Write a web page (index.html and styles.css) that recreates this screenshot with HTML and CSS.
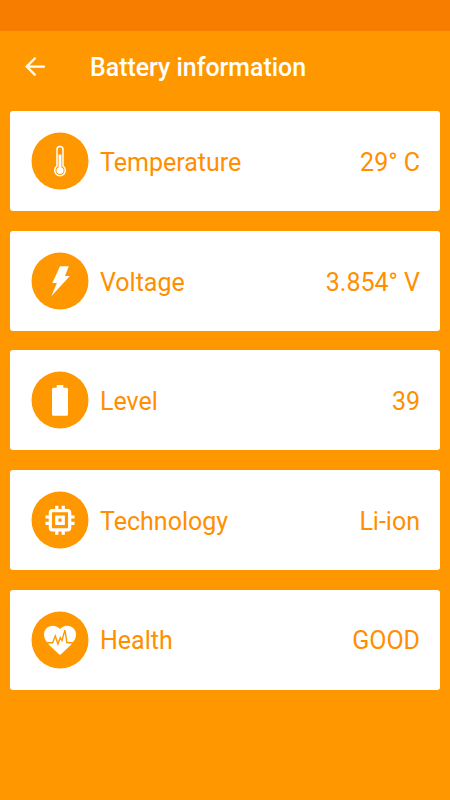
FILE: index.html
```html
<!DOCTYPE html>
<html lang="en">
<head>
	<meta charset="UTF-8">
	<meta name="viewport" content="width=device-width, initial-scale=1.0">
	<title>Battery information</title>
	<link rel="stylesheet" href="styles.css">
</head>
<body>
	<div class="statusbar"></div>
	<header class="toolbar">
		<svg class="back" viewBox="0 0 20 20">
			<path d="M19.8 9.6H1.8M10.5 .8L1.7 9.6l8.8 8.8"/>
		</svg>
		<h1>Battery information</h1>
	</header>

	<main class="cards">
		<div class="card">
			<svg class="icon" viewBox="-0.5 -0.5 58 58">
				<circle class="disc" cx="28.5" cy="28.5" r="28.5"/>
				<path class="line" d="M25.5 33.5V17a3 3 0 0 1 6 0v16.5a5.3 5.3 0 1 1-6 0z"/>
				<path d="M27.1 22h2.8v12.7a3.6 3.6 0 1 1-2.8 0z"/>
			</svg>
			<span class="name">Temperature</span>
			<span class="value">29° C</span>
		</div>
		<div class="card">
			<svg class="icon" viewBox="-0.5 -0.5 58 58">
				<circle class="disc" cx="28.5" cy="28.5" r="28.5"/>
				<path d="M28.5 13.8h8.8l-3.8 9.7h4.8L19.8 43.8l5.6-13.3h-4.6z"/>
			</svg>
			<span class="name">Voltage</span>
			<span class="value">3.854° V</span>
		</div>
		<div class="card">
			<svg class="icon" viewBox="-0.5 -0.5 58 58">
				<circle class="disc" cx="28.5" cy="28.5" r="28.5"/>
				<path d="M25.2 13.4h6.6v2.9h3.2q1.5 0 1.5 1.5v25q0 1.5-1.5 1.5H22q-1.5 0-1.5-1.5v-25q0-1.5 1.5-1.5h3.2z"/>
			</svg>
			<span class="name">Level</span>
			<span class="value">39</span>
		</div>
		<div class="card">
			<svg class="icon" viewBox="-0.5 -0.5 58 58">
				<circle class="disc" cx="28.5" cy="28.5" r="28.5"/>
				<path transform="translate(9.2 9.4) scale(1.61)" d="M15 9H9v6h6V9zm-2 4h-2v-2h2v2zm8-2V9h-2V7c0-1.1-.9-2-2-2h-2V3h-2v2h-2V3H9v2H7c-1.1 0-2 .9-2 2v2H3v2h2v2H3v2h2v2c0 1.1.9 2 2 2h2v2h2v-2h2v2h2v-2h2c1.1 0 2-.9 2-2v-2h2v-2h-2v-2h2zm-4 6H7V7h10v10z"/>
			</svg>
			<span class="name">Technology</span>
			<span class="value">Li-ion</span>
		</div>
		<div class="card">
			<svg class="icon" viewBox="-0.5 -0.5 58 58">
				<circle class="disc" cx="28.5" cy="28.5" r="28.5"/>
				<path transform="translate(9.3 9.4) scale(1.6)" d="M12 21.35l-1.45-1.32C5.4 15.36 2 12.28 2 8.5 2 5.42 4.42 3 7.5 3c1.74 0 3.41.81 4.5 2.09C13.09 3.81 14.76 3 16.5 3 19.58 3 22 5.42 22 8.5c0 3.78-3.4 6.86-8.55 11.54L12 21.35z"/>
				<path class="pulse" d="M15 31.3h6.2l2.6-7 2.6 8.3 2.4-6.4 1.7 2.8 2.9-10.4 2.1 12.7H42"/>
			</svg>
			<span class="name">Health</span>
			<span class="value">GOOD</span>
		</div>
	</main>
</body>
</html>
```
FILE: styles.css
```css
* {
	margin: 0;
	padding: 0;
	box-sizing: border-box;
}

body {
	height: 800px;
	background-color: #ff9800;
	font-family: Roboto, sans-serif;
	overflow: hidden;
}

.statusbar {
	height: 31.3px;
	background-color: #f77d00;
}

.toolbar {
	display: flex;
	align-items: center;
	height: 80px;
	padding: 0 25px 8px;
	color: #fff;
}

.toolbar h1 {
	margin-left: 45px;
	padding-top: 2px;
	font-size: 24.9px;
	font-weight: 500;
	line-height: 30px;
}

.back {
	width: 20px;
	height: 20px;
	fill: none;
	stroke: #fff;
	stroke-width: 2.3;
	overflow: visible;
}

.cards {
	display: flex;
	flex-direction: column;
	gap: 19.6px;
	padding: 0 10px;
}

.card {
	display: flex;
	align-items: center;
	height: 100px;
	padding: 0 20px 0 21px;
	background-color: #fff;
	border-radius: 3px;
	color: #ff8f00;
	font-size: 25px;
	line-height: 30px;
}

.icon {
	width: 58px;
	height: 58px;
	fill: #fff;
}

.icon .disc {
	fill: #ff9800;
}

.icon .line {
	fill: none;
	stroke: #fff;
	stroke-width: 1.5;
}

.icon .pulse {
	fill: none;
	stroke: #ff9800;
	stroke-width: 1.4;
}

.name {
	margin-left: 11px;
	padding-top: 3.4px;
}

.value {
	margin-left: auto;
	padding-top: 3.4px;
}
```
